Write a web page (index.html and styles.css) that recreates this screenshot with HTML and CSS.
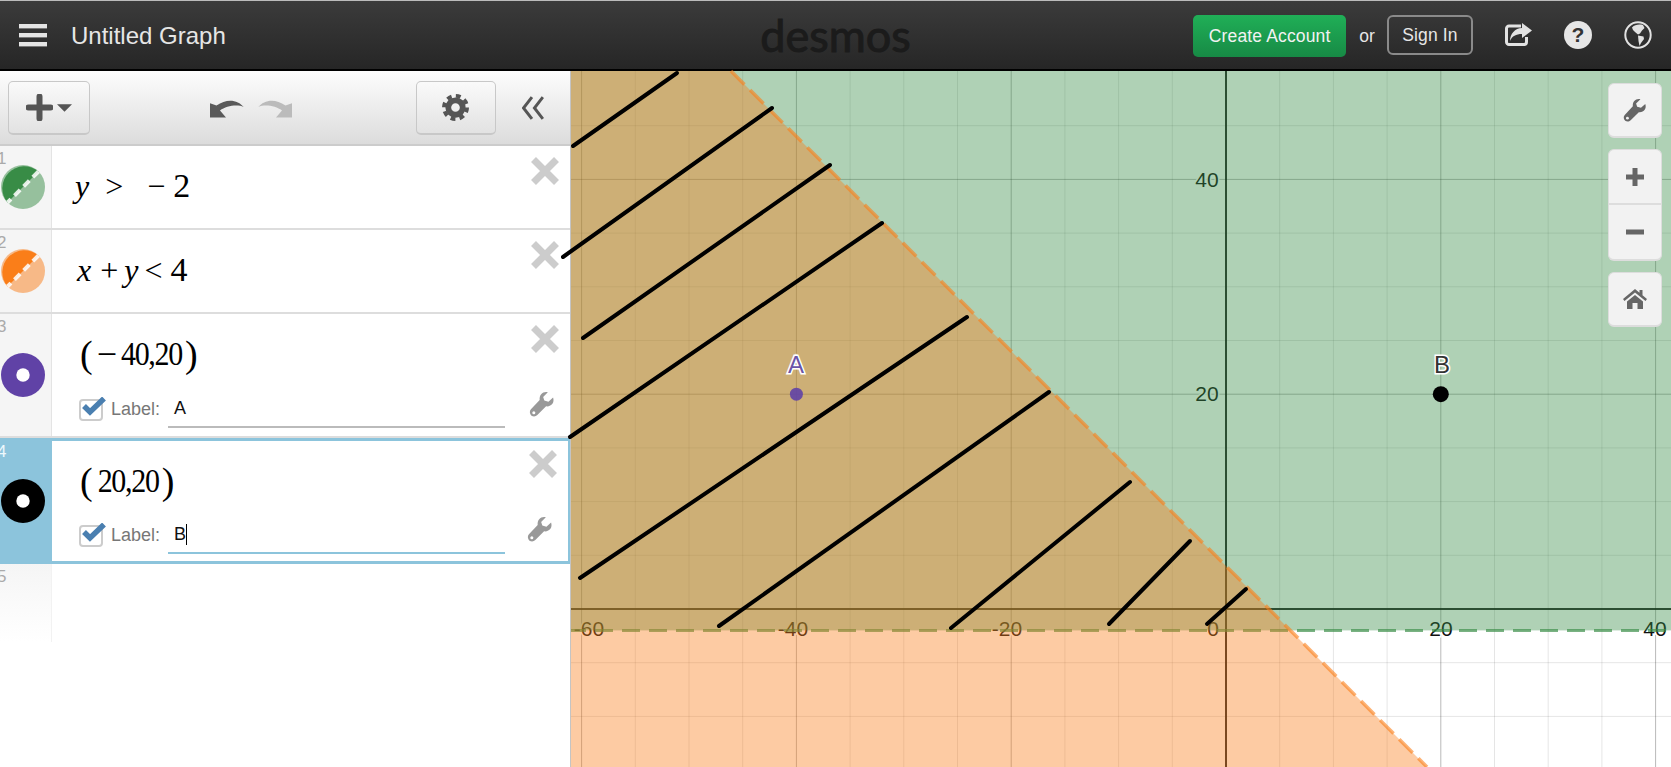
FILE: index.html
```html
<!DOCTYPE html>
<html lang="en">

<head>
    <meta charset="UTF-8">
    <title>Untitled Graph</title>
    <link rel="stylesheet" href="styles.css">
</head>

<body>
    <header class="topbar">
        <div class="topLeft">
            <div class="menuIcon"><span></span><span></span><span></span></div>
            <div class="title">Untitled Graph</div>
        </div>
        <div class="logo">desmos</div>
        <div class="topRight">
            <div class="btnCreate">Create Account</div>
            <div class="orText">or</div>
            <div class="btnSign">Sign In</div>
            <svg class="topIcon" viewBox="0 0 28 24">
                <path d="M17 3H5a2.500 2.500 0 0 0-2.500 2.500V19A2.500 2.500 0 0 0 5 21.500H20a2.500 2.500 0 0 0 2.500-2.500V14" fill="none" stroke="#e2e2e2" stroke-width="3" />
                <path d="M18 0L28 7.500L18 15V11C12 11 8 13 6 18C6 11 11 5 18 5Z" fill="#e2e2e2" />
            </svg>
            <svg class="topIcon helpIcon" viewBox="0 0 28 28">
                <circle cx="14" cy="14" r="14" fill="#e6e6e6" />
                <text x="14" y="21" text-anchor="middle" class="helpMark">?</text>
            </svg>
            <svg class="topIcon globeIcon" viewBox="0 0 28 28">
                <circle cx="14" cy="14" r="12.700" fill="none" stroke="#e2e2e2" stroke-width="2" />
                <path d="M8 6.500C11 3.500 15 3 19 4L20.500 7L18 9.500L16 12.500L14 13.500L11 11L9 9Z" fill="#e2e2e2" />
                <path d="M14 14.500L19.500 15.500L20 18L17 22L15.500 25L14.500 20Z" fill="#e2e2e2" />
            </svg>
        </div>
    </header>

    <main class="app">
        <aside class="panel">
            <div class="toolbar">
                <div class="toolBtn addBtn">
                    <svg class="plusIcon" viewBox="0 0 27 27">
                        <path d="M13.500 2.500V24.500M2.500 13.500H24.500" stroke="#555" stroke-width="6" stroke-linecap="round" />
                    </svg>
                    <svg class="caretIcon" viewBox="0 0 16 8">
                        <path d="M0 0H16L8 8Z" fill="#555" />
                    </svg>
                </div>
                <div class="undoGroup">
                    <svg class="undoIcon" viewBox="0 0 34 18">
                        <path d="M0 3.300V17.500H16L10 10.500C16 6 27 4 33.700 7C28 0 17 -2 6.500 5.500Z" fill="#5a5a5a" />
                    </svg>
                    <svg class="undoIcon redo" viewBox="0 0 34 18">
                        <path d="M0 3.300V17.500H16L10 10.500C16 6 27 4 33.700 7C28 0 17 -2 6.500 5.500Z" fill="#bbb" />
                    </svg>
                </div>
                <div class="toolBtn gearBtn">
                    <svg class="gearIcon" viewBox="0 0 28 28">
                        <circle cx="14" cy="14" r="7.500" fill="none" stroke="#555" stroke-width="6" />
                        <circle cx="14" cy="14" r="12" fill="none" stroke="#555" stroke-width="4" stroke-dasharray="5 4.425" />
                    </svg>
                </div>
                <svg class="collapseIcon" viewBox="0 0 22 24">
                    <path d="M10 1L1.500 12L10 23M21 1L12.500 12L21 23" fill="none" stroke="#555" stroke-width="3" />
                </svg>
            </div>

            <div class="row rowOne">
                <div class="gutter">
                    <span class="num">1</span>
                    <svg class="swatch" viewBox="0 0 44 44">
                        <circle cx="22" cy="22" r="22" fill="#388c46" opacity="0.5" />
                        <path d="M37.500 6.500A22 22 0 0 0 6.500 37.500Z" fill="#388c46" />
                        <path d="M37.500 6.500L6.500 37.500" stroke="#fff" stroke-width="4" stroke-dasharray="8 5" opacity="0.85" />
                    </svg>
                </div>
                <div class="expr">
                    <div class="math mathY">
                        <i>y</i><span class="gapA">&gt;</span><span class="gapB">−</span><span class="gapC">2</span>
                    </div>
                </div>
                <div class="side">
                    <svg class="closeIcon" viewBox="0 0 28 28">
                        <path d="M2.500 2.500L25.500 25.500M25.500 2.500L2.500 25.500" stroke="#ccc" stroke-width="7" />
                    </svg>
                </div>
            </div>

            <div class="row rowOne">
                <div class="gutter">
                    <span class="num">2</span>
                    <svg class="swatch" viewBox="0 0 44 44">
                        <circle cx="22" cy="22" r="22" fill="#fa7e19" opacity="0.5" />
                        <path d="M37.500 6.500A22 22 0 0 0 6.500 37.500Z" fill="#fa7e19" />
                        <path d="M37.500 6.500L6.500 37.500" stroke="#fff" stroke-width="4" stroke-dasharray="8 5" opacity="0.85" />
                    </svg>
                </div>
                <div class="expr">
                    <div class="math mathX">
                        <i>x</i><span class="gapD">+</span><i class="gapE">y</i><span class="gapE">&lt;</span><span class="gapF">4</span>
                    </div>
                </div>
                <div class="side">
                    <svg class="closeIcon" viewBox="0 0 28 28">
                        <path d="M2.500 2.500L25.500 25.500M25.500 2.500L2.500 25.500" stroke="#ccc" stroke-width="7" />
                    </svg>
                </div>
            </div>

            <div class="row rowPoint">
                <div class="gutter">
                    <span class="num">3</span>
                    <svg class="swatch" viewBox="0 0 44 44">
                        <circle cx="22" cy="22" r="22" fill="#6042a6" />
                        <circle cx="22" cy="22" r="6.700" fill="#fff" />
                    </svg>
                </div>
                <div class="expr">
                    <div class="math mathPoint">
                        <span class="paren">(</span><span class="minus">−</span><span class="digits">40,20</span><span class="paren">)</span>
                    </div>
                    <div class="labelLine">
                        <svg class="check" viewBox="0 0 28 25">
                            <rect x="1" y="3" width="22" height="20" rx="3" fill="#fff" stroke="#ccc" stroke-width="2" />
                            <path d="M5 9L11 15L25 1.500" fill="none" stroke="#4a7fb0" stroke-width="5.500" />
                        </svg>
                        <span class="labelText">Label:</span>
                        <span class="labelField">A</span>
                    </div>
                </div>
                <div class="side">
                    <svg class="closeIcon" viewBox="0 0 28 28">
                        <path d="M2.500 2.500L25.500 25.500M25.500 2.500L2.500 25.500" stroke="#ccc" stroke-width="7" />
                    </svg>
                    <svg class="wrenchIcon" viewBox="0 0 24 24">
                        <path d="M21.500 6.500L17.500 10L14 9L13 6L17 2C13 1 9.500 4 10 8.500L2.500 16.500C1 18 1.500 20.500 3 22C4.500 23 6.500 23 8 21.500L15.500 14C20 14.500 23 11 21.500 6.500Z" fill="#999" />
                        <circle cx="5" cy="19.500" r="1.300" fill="#fff" />
                    </svg>
                </div>
            </div>

            <div class="row rowPoint rowActive">
                <div class="gutter">
                    <span class="num">4</span>
                    <svg class="swatch" viewBox="0 0 44 44">
                        <circle cx="22" cy="22" r="22" fill="#000" />
                        <circle cx="22" cy="22" r="6.700" fill="#fff" />
                    </svg>
                </div>
                <div class="expr">
                    <div class="math mathPoint">
                        <span class="paren">(</span><span class="digits gapH">20,20</span><span class="paren">)</span>
                    </div>
                    <div class="labelLine">
                        <svg class="check" viewBox="0 0 28 25">
                            <rect x="1" y="3" width="22" height="20" rx="3" fill="#fff" stroke="#ccc" stroke-width="2" />
                            <path d="M5 9L11 15L25 1.500" fill="none" stroke="#4a7fb0" stroke-width="5.500" />
                        </svg>
                        <span class="labelText">Label:</span>
                        <span class="labelField"><span class="caret">B</span></span>
                    </div>
                </div>
                <div class="side">
                    <svg class="closeIcon" viewBox="0 0 28 28">
                        <path d="M2.500 2.500L25.500 25.500M25.500 2.500L2.500 25.500" stroke="#ccc" stroke-width="7" />
                    </svg>
                    <svg class="wrenchIcon" viewBox="0 0 24 24">
                        <path d="M21.500 6.500L17.500 10L14 9L13 6L17 2C13 1 9.500 4 10 8.500L2.500 16.500C1 18 1.500 20.500 3 22C4.500 23 6.500 23 8 21.500L15.500 14C20 14.500 23 11 21.500 6.500Z" fill="#999" />
                        <circle cx="5" cy="19.500" r="1.300" fill="#fff" />
                    </svg>
                </div>
            </div>

            <div class="row rowEmpty">
                <div class="gutter">
                    <span class="num">5</span>
                </div>
            </div>
        </aside>

        <section class="graph">
            <!-- viewBox is in page coordinates, the hatch lines run a little over the panel -->
            <svg class="plot" viewBox="571 71 1100 696">
                <rect x="571" y="71" width="1100" height="696" fill="#fff" />
                <path class="minor" d="M635.300 71V767M689 71V767M742.700 71V767M850.100 71V767M903.800 71V767M957.500 71V767M1064.900 71V767M1118.600 71V767M1172.300 71V767M1279.700 71V767M1333.400 71V767M1387.100 71V767M1494.500 71V767M1548.200 71V767M1601.900 71V767M571 716.400H1671M571 662.700H1671M571 555.300H1671M571 501.600H1671M571 447.900H1671M571 340.500H1671M571 286.800H1671M571 233.100H1671M571 125.700H1671" />
                <path class="major" d="M581.600 71V767M796.400 71V767M1011.200 71V767M1440.800 71V767M1655.600 71V767M571 394.200H1671M571 179.400H1671" />
                <path class="axis" d="M1226 71V767M571 609H1671" />

                <g class="tick">
                    <text x="589" y="636">-60</text>
                    <text x="793" y="636">-40</text>
                    <text x="1007" y="636">-20</text>
                    <text x="1213" y="636">0</text>
                    <text x="1441" y="636">20</text>
                    <text x="1655" y="636">40</text>
                    <text x="1207" y="187">40</text>
                    <text x="1207" y="401">20</text>
                </g>

                <rect x="571" y="71" width="1100" height="559.400" fill="#388c46" opacity="0.4" />
                <path class="dashGreen" d="M571 630.400H1671" />
                <path d="M571 71H731L1427 767H571Z" fill="#fa7e19" opacity="0.4" />
                <path class="dashOrange" d="M731 71L1427 767" />

                <circle cx="796.400" cy="394.200" r="6.500" fill="#6042a6" opacity="0.9" />
                <circle cx="1440.800" cy="394.200" r="8" fill="#000" />
                <text class="pointLabel labelA" x="796" y="373">A</text>
                <text class="pointLabel labelB" x="1442" y="373">B</text>

                <g class="hatch">
                    <path d="M573 146L677 73" />
                    <path d="M563 257L772 108" />
                    <path d="M583 338L830 165" />
                    <path d="M570 437L882 223" />
                    <path d="M580 578L967 317" />
                    <path d="M719 626L1049 392" />
                    <path d="M951 628L1130 482" />
                    <path d="M1109 624L1190 541" />
                    <path d="M1207 624L1246 589" />
                </g>
            </svg>

            <div class="graphTools">
                <div class="graphBtn">
                    <svg class="graphWrench" viewBox="0 0 24 24">
                        <path d="M21.500 6.500L17.500 10L14 9L13 6L17 2C13 1 9.500 4 10 8.500L2.500 16.500C1 18 1.500 20.500 3 22C4.500 23 6.500 23 8 21.500L15.500 14C20 14.500 23 11 21.500 6.500Z" fill="#666" />
                        <circle cx="5" cy="19.500" r="1.300" fill="#f2f2f2" />
                    </svg>
                </div>
                <div class="zoomGroup">
                    <div class="graphBtn zoomBtn">
                        <svg class="zoomIcon" viewBox="0 0 18 18">
                            <path d="M9 0V18M0 9H18" stroke="#666" stroke-width="5" />
                        </svg>
                    </div>
                    <div class="graphBtn zoomBtn zoomOut">
                        <svg class="zoomIcon" viewBox="0 0 18 18">
                            <path d="M0 9H18" stroke="#666" stroke-width="5" />
                        </svg>
                    </div>
                </div>
                <div class="graphBtn homeBtn">
                    <svg class="homeIcon" viewBox="0 0 24 20">
                        <path d="M12 0L0 10L1.500 12L12 3.500L22.500 12L24 10L19.500 6.300V1H16.500V3.800Z" fill="#666" />
                        <path d="M4 12.500L12 6L20 12.500V20H14.500V14H9.500V20H4Z" fill="#666" />
                    </svg>
                </div>
            </div>
        </section>
    </main>
</body>

</html>
```

FILE: styles.css
```css
* {
    margin: 0;
    padding: 0;
    box-sizing: border-box;
}

body {
    width: 1671px;
    height: 767px;
    overflow: hidden;
    background-color: #fff;
    font-family: "Liberation Sans", Arial, sans-serif;
}

.topbar {
    height: 71px;
    display: grid;
    grid-template-columns: 1fr auto 1fr;
    align-items: center;
    background: linear-gradient(#3b3b3b, #262626);
    border-top: 1px solid #bbb;
    border-bottom: 2px solid #000;
}

.topLeft {
    display: flex;
    align-items: center;
    padding-left: 19px;
}

.menuIcon {
    width: 28px;
    display: flex;
    flex-direction: column;
    gap: 4px;
}

.menuIcon span {
    height: 5px;
    background-color: #e4e4e4;
    border-bottom: 1px solid #777;
}

.title {
    margin-left: 24px;
    margin-top: 2px;
    font-size: 24px;
    color: #e6e6e6;
}

.logo {
    font-family: Lato, sans-serif;
    font-size: 45px;
    line-height: 60px;
    color: #1b1b1b;
    -webkit-text-stroke: 1px #1b1b1b;
    margin-top: -1px;
}

.topRight {
    display: flex;
    align-items: center;
    justify-content: flex-end;
    padding-right: 19px;
    font-size: 17.500px;
    letter-spacing: 0.15px;
    color: #e6e6e6;
}

.btnCreate {
    width: 153px;
    height: 42px;
    line-height: 42px;
    margin-top: 2px;
    text-align: center;
    color: #f2f2f2;
    background: linear-gradient(#20af57, #178a45);
    border-radius: 5px;
}

.orText {
    margin-left: 13px;
    margin-top: 2px;
}

.btnSign {
    width: 86px;
    height: 40px;
    line-height: 36px;
    margin-left: 12px;
    text-align: center;
    border: 2px solid #8a8a8a;
    border-radius: 6px;
}

.topIcon {
    width: 28px;
    height: 28px;
    margin-left: 31px;
}

.helpIcon {
    margin-left: 32px;
}

.globeIcon {
    margin-left: 32px;
}

.helpMark {
    font-size: 21px;
    font-weight: bold;
    fill: #333;
}

.app {
    display: flex;
    height: 696px;
}

.panel {
    width: 571px;
    flex-shrink: 0;
    border-right: 1px solid #c4c4c4;
}

.toolbar {
    height: 75px;
    display: flex;
    align-items: center;
    padding: 0 26px 0 8px;
    background: linear-gradient(#fdfdfd, #dcdcdc);
    border-bottom: 2px solid #ccc;
}

.toolBtn {
    height: 54px;
    margin-top: 1px;
    display: flex;
    align-items: center;
    justify-content: center;
    background: linear-gradient(#fafafa, #e2e2e2);
    border: 1px solid #c8c8c8;
    border-bottom-width: 2px;
    border-radius: 5px;
}

.addBtn {
    width: 82px;
    gap: 4px;
}

.plusIcon {
    width: 27px;
    height: 27px;
}

.caretIcon {
    width: 15px;
    height: 8px;
}

.undoGroup {
    margin-left: 120px;
    margin-top: 2px;
    display: flex;
    gap: 14px;
}

.undoIcon {
    width: 34px;
    height: 18px;
}

.redo {
    transform: scaleX(-1);
}

.gearBtn {
    width: 81px;
    margin-left: 124px;
}

.gearIcon {
    width: 27px;
    height: 27px;
}

.collapseIcon {
    width: 22px;
    height: 24px;
    margin-left: 26px;
    margin-top: 1px;
}

.row {
    display: flex;
    border-bottom: 2px solid #ddd;
}

.rowOne {
    height: 84px;
}

.rowPoint {
    height: 124px;
}

.gutter {
    width: 52px;
    flex-shrink: 0;
    position: relative;
    display: flex;
    align-items: center;
    padding-left: 1px;
    background-color: #f5f5f5;
    border-right: 1px solid #e4e4e4;
}

.num {
    position: absolute;
    left: -3px;
    top: 3px;
    font-size: 17px;
    color: #aaa;
}

.swatch {
    width: 44px;
    height: 44px;
}

.expr {
    flex: 1;
    padding-left: 23px;
}

.math {
    font-family: "Liberation Serif", "Times New Roman", serif;
    font-size: 32px;
    line-height: 40px;
    color: #000;
}

.mathY,
.mathX {
    padding-top: 20px;
}

.mathX {
    padding-left: 2px;
}

.gapA {
    margin-left: 16px;
}

.gapB {
    margin-left: 24px;
}

.gapC {
    margin-left: 8px;
    font-size: 34px;
}

.gapD {
    margin-left: 9px;
}

.gapE {
    margin-left: 6px;
}

.gapF {
    margin-left: 8px;
    font-size: 34px;
}

.mathPoint {
    height: 76px;
    padding-top: 4px;
    padding-left: 5px;
    display: flex;
    align-items: center;
    font-size: 30px;
}

.paren {
    font-size: 38px;
    font-weight: normal;
    line-height: 40px;
}

.minus {
    margin-left: 4px;
    font-size: 36px;
}

.digits {
    display: inline-block;
    letter-spacing: -1.300px;
    margin-left: 4px;
    margin-right: 3px;
    transform: scaleY(1.12);
}

.gapH {
    margin-left: 5px;
}

.labelLine {
    display: flex;
    align-items: center;
    height: 38px;
    padding-left: 4px;
}

.check {
    width: 28px;
    height: 25px;
}

.labelText {
    margin-left: 4px;
    font-size: 18px;
    color: #777;
}

.labelField {
    width: 337px;
    height: 38px;
    line-height: 36px;
    margin-left: 8px;
    padding-left: 6px;
    font-size: 18px;
    color: #111;
    border-bottom: 2px solid #bbb;
}

.caret {
    display: inline-block;
    height: 21px;
    line-height: 21px;
    border-right: 1px solid #000;
}

.side {
    width: 40px;
    margin-right: 5px;
    display: flex;
    flex-direction: column;
    align-items: center;
    padding-top: 11px;
}

.closeIcon {
    width: 28px;
    height: 28px;
    flex-shrink: 0;
}

.wrenchIcon {
    width: 28px;
    height: 28px;
    flex-shrink: 0;
    margin-top: 37px;
    margin-left: -6px;
}

.rowActive {
    height: 126px;
    border: 3px solid #8cc4dc;
    border-left: 0;
    border-right-width: 2px;
}

.rowActive .gutter {
    background-color: #8cc4dc;
    border-right: 0;
}

.rowActive .num {
    top: 1px;
    color: #eef8fc;
}

.rowActive .mathPoint {
    height: 75px;
    padding-top: 5px;
}

.rowActive .labelField {
    border-bottom-color: #8cc4dc;
}

.rowActive .side {
    padding-top: 9px;
}

.rowEmpty {
    height: 78px;
    border-bottom: 0;
}

.rowEmpty .gutter {
    background: linear-gradient(#f5f5f5, #fff);
    border-right-color: #f2f2f2;
}

.graph {
    position: relative;
    flex: 1;
}

.plot {
    display: block;
    width: 1100px;
    height: 696px;
    overflow: visible;
}

.minor,
.major,
.axis {
    fill: none;
    stroke: #000;
}

.minor {
    stroke-opacity: 0.1;
}

.major {
    stroke-opacity: 0.28;
}

.axis {
    stroke-width: 2;
    stroke-opacity: 0.85;
}

.tick text {
    font-size: 21px;
    text-anchor: middle;
    fill: #111;
    stroke: #fff;
    stroke-width: 3px;
    paint-order: stroke;
}

.dashGreen {
    stroke: #388c46;
    stroke-width: 3;
    stroke-opacity: 0.67;
    stroke-dasharray: 18 9;
    stroke-dashoffset: 3;
}

.dashOrange {
    stroke: #fa7e19;
    stroke-width: 3.500;
    stroke-opacity: 0.6;
    stroke-dasharray: 19 8;
}

.pointLabel {
    font-size: 24px;
    text-anchor: middle;
    stroke: #fff;
    stroke-width: 3px;
    paint-order: stroke;
}

.labelA {
    fill: #6a55a8;
}

.labelB {
    fill: #333;
}

.hatch path {
    fill: none;
    stroke: #000;
    stroke-width: 4;
    stroke-linecap: round;
}

.graphTools {
    position: absolute;
    top: 12px;
    right: 9px;
    width: 54px;
    display: flex;
    flex-direction: column;
    gap: 11px;
}

.graphBtn {
    height: 55px;
    display: flex;
    align-items: center;
    justify-content: center;
    background-color: #f2f2f2;
    border: 1px solid #ddd;
    border-bottom-width: 2px;
    border-radius: 6px;
}

.graphWrench {
    width: 26px;
    height: 26px;
}

.zoomGroup {
    display: flex;
    flex-direction: column;
}

.zoomBtn {
    height: 56px;
    border-radius: 6px 6px 0 0;
    border-bottom: 2px solid #ddd;
}

.zoomOut {
    border-top: 0;
    border-radius: 0 0 6px 6px;
}

.zoomIcon {
    width: 18px;
    height: 18px;
}

.homeIcon {
    width: 24px;
    height: 20px;
}
```
